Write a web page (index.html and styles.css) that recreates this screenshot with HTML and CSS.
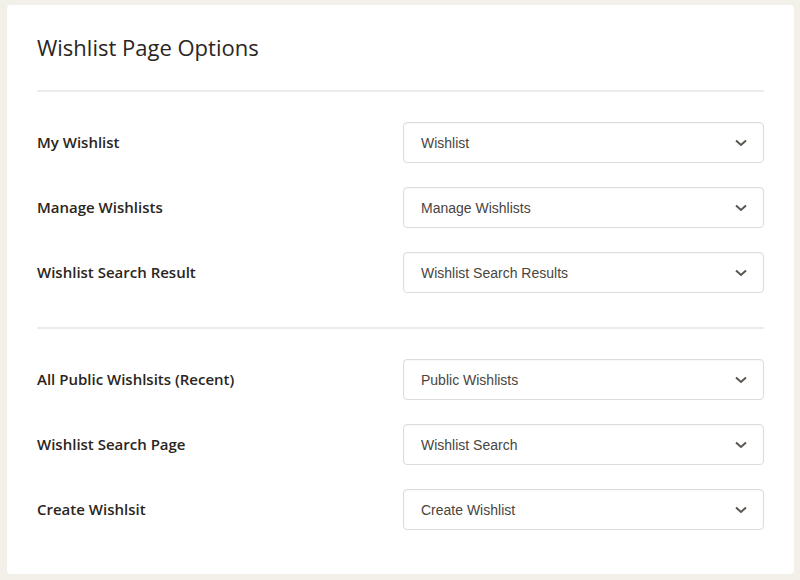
FILE: index.html
```html
<!DOCTYPE html>
<html lang="en">
<head>
    <meta charset="UTF-8">
    <meta name="viewport" content="width=device-width, initial-scale=1.0">
    <title>Wishlist Page Options</title>
    <link rel="stylesheet" href="styles.css">
</head>
<body>
    <div class="card">
        <h1 class="title">Wishlist Page Options</h1>
        <hr class="divider">

        <div class="group">
            <div class="row">
                <label class="label">My Wishlist</label>
                <div class="select"><span>Wishlist</span><svg class="chev" width="12" height="8" viewBox="0 0 12 8"><path d="M1 1.5 L6 6 L11 1.5" /></svg></div>
            </div>
            <div class="row">
                <label class="label">Manage Wishlists</label>
                <div class="select"><span>Manage Wishlists</span><svg class="chev" width="12" height="8" viewBox="0 0 12 8"><path d="M1 1.5 L6 6 L11 1.5" /></svg></div>
            </div>
            <div class="row">
                <label class="label">Wishlist Search Result</label>
                <div class="select"><span>Wishlist Search Results</span><svg class="chev" width="12" height="8" viewBox="0 0 12 8"><path d="M1 1.5 L6 6 L11 1.5" /></svg></div>
            </div>
        </div>

        <hr class="divider">

        <div class="group">
            <div class="row">
                <label class="label">All Public Wishlsits (Recent)</label>
                <div class="select"><span>Public Wishlists</span><svg class="chev" width="12" height="8" viewBox="0 0 12 8"><path d="M1 1.5 L6 6 L11 1.5" /></svg></div>
            </div>
            <div class="row">
                <label class="label">Wishlist Search Page</label>
                <div class="select"><span>Wishlist Search</span><svg class="chev" width="12" height="8" viewBox="0 0 12 8"><path d="M1 1.5 L6 6 L11 1.5" /></svg></div>
            </div>
            <div class="row">
                <label class="label">Create Wishlsit</label>
                <div class="select"><span>Create Wishlist</span><svg class="chev" width="12" height="8" viewBox="0 0 12 8"><path d="M1 1.5 L6 6 L11 1.5" /></svg></div>
            </div>
        </div>
    </div>
</body>
</html>
```

FILE: styles.css
```css
* {
    margin: 0;
    padding: 0;
    box-sizing: border-box;
}

body {
    background: #f3f0ea;
    padding: 5px 6px 6px 7px;
    height: 580px;
    overflow: hidden;
    font-family: "Open Sans", sans-serif;
    color: #2b2622;
}

.card {
    background: #fff;
    border-radius: 4px;
    height: 569px;
    padding: 28px 30px 0 30px;
}

.title {
    font-size: 22px;
    font-weight: 400;
    line-height: 28px;
    color: #2b2622;
    margin-bottom: 29px;
}

.divider {
    border: none;
    height: 2px;
    background: #ebebeb;
}

.group {
    display: flex;
    flex-direction: column;
    gap: 24px;
    padding: 30px 0 34px 0;
}

.row {
    display: grid;
    grid-template-columns: 1fr 361px;
    align-items: center;
}

.label {
    font-size: 15px;
    font-weight: 600;
    color: #2a2520;
    padding-bottom: 2px;
}

.select {
    height: 41px;
    border: 1px solid #dcdcdc;
    border-radius: 4px;
    background: #fff;
    box-shadow: inset 0 1px 2px rgba(0, 0, 0, 0.04);
    display: flex;
    align-items: center;
    justify-content: space-between;
    padding: 0 16px 0 17px;
    font-family: "Liberation Sans", Arial, sans-serif;
    font-size: 14px;
    color: #4a4440;
}

.chev {
    fill: none;
    stroke: #5b5550;
    stroke-width: 2;
}
```
